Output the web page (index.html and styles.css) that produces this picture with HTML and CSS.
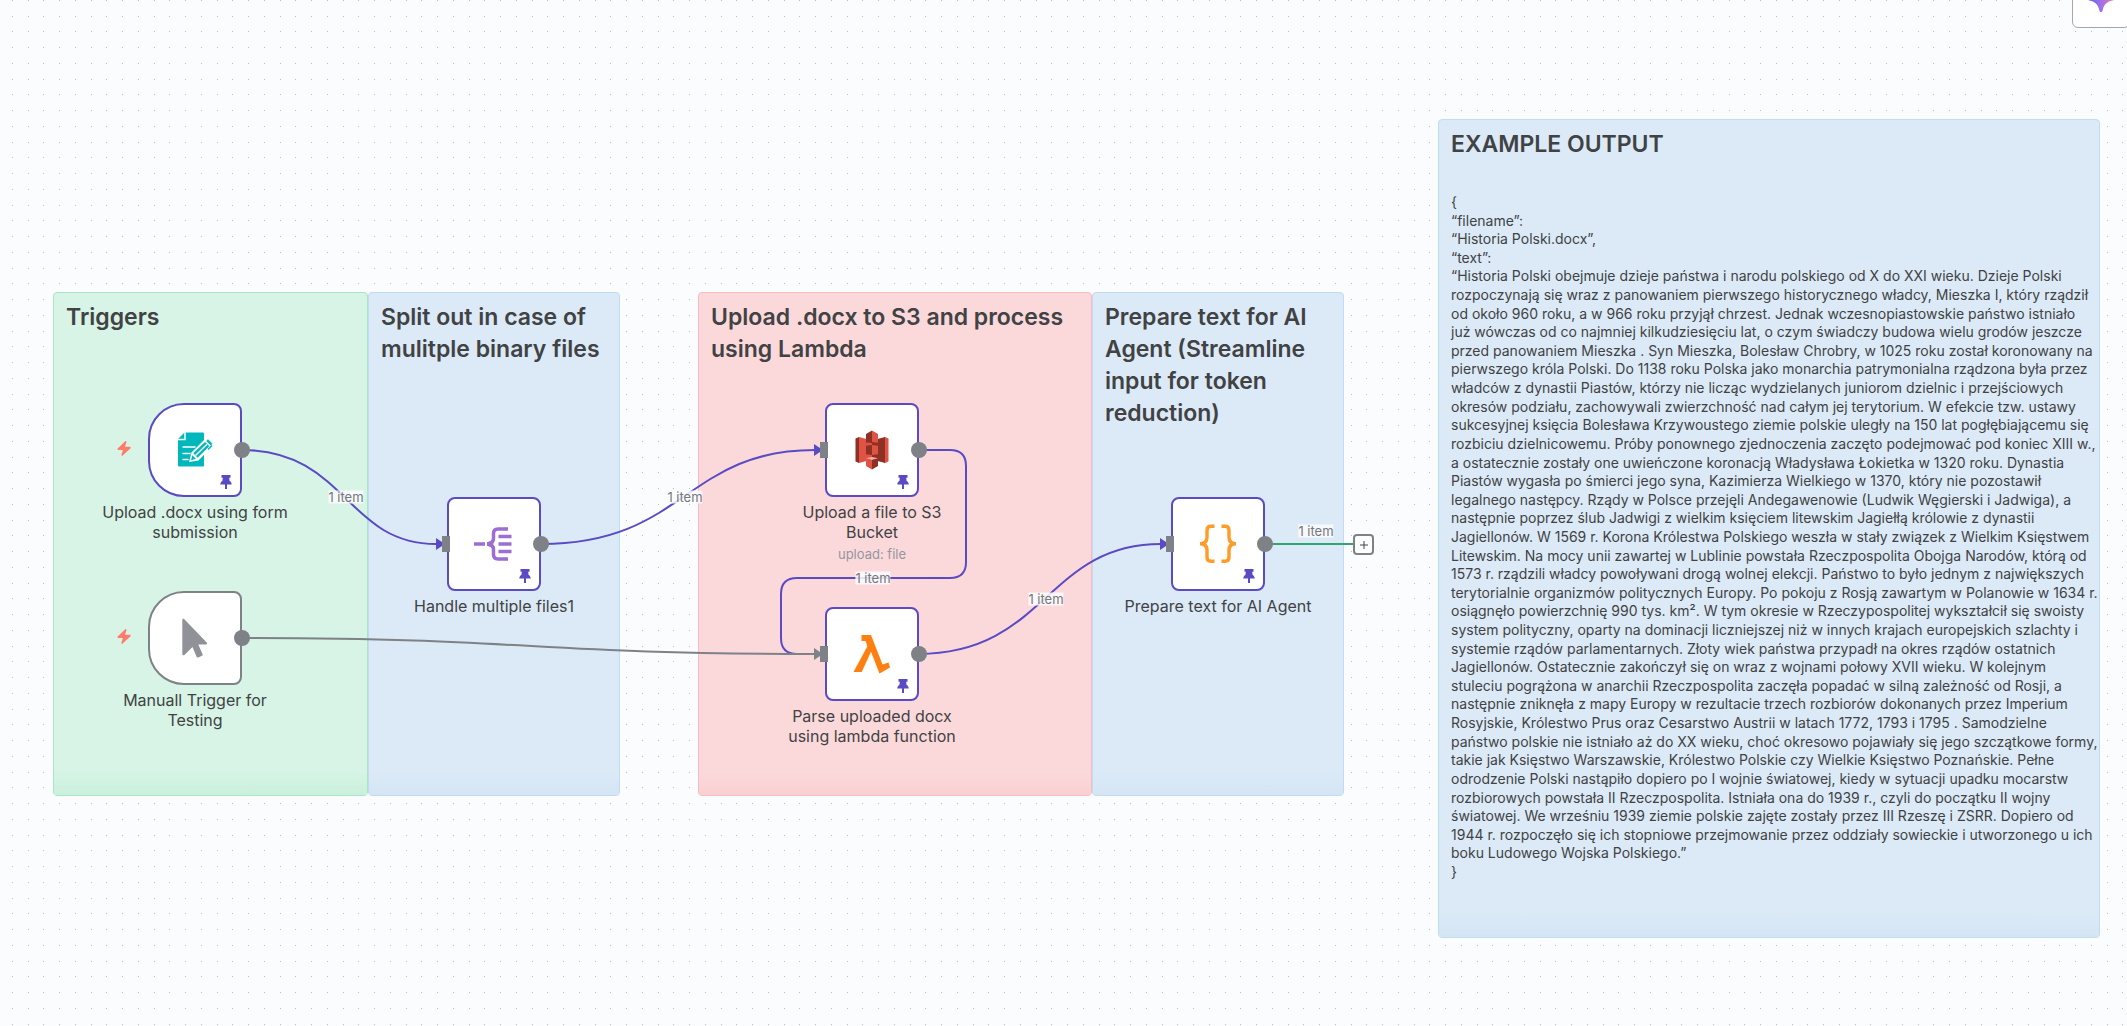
FILE: index.html
```html
<!DOCTYPE html>
<html lang="en">
<head>
<meta charset="utf-8">
<meta name="viewport" content="width=device-width, initial-scale=1">
<title>Workflow canvas</title>
<link rel="stylesheet" href="styles.css">
</head>
<body>
<svg class="symbols" aria-hidden="true">
  <symbol id="pin" viewBox="0 0 12 14"><path d="M1.500 0h9v2.800H9.200L9.600 6c1.400.7 2.100 1.900 2.100 3.500H7V14H5V9.500H.3C.3 7.900 1 6.700 2.400 6l.4-3.200H1.500z"/></symbol>
  <symbol id="bolt" viewBox="0 0 14 15"><path d="M8.200.3a.8.800 0 0 1 1.300.8L8 5.800h4.700c.9 0 1.300 1 .6 1.600l-7.600 7.200a.8.800 0 0 1-1.300-.8L5.900 9H1.300C.4 9 0 8 .7 7.400z"/></symbol>
</svg>
<main class="canvas">
  <svg class="dots" aria-hidden="true">
    <defs>
      <pattern id="grid" x="12" width="63" height="63" patternUnits="userSpaceOnUse">
        <path d="M0 0h1v1H0zM16 0h1v1h-1zM31 0h1v1h-1zM47 0h1v1h-1zM0 16h1v1H0zM16 16h1v1h-1zM31 16h1v1h-1zM47 16h1v1h-1zM0 31h1v1H0zM16 31h1v1h-1zM31 31h1v1h-1zM47 31h1v1h-1zM0 47h1v1H0zM16 47h1v1h-1zM31 47h1v1h-1zM47 47h1v1h-1z"/>
      </pattern>
    </defs>
    <rect width="100%" height="100%" fill="url(#grid)"/>
  </svg>

  <section class="sticky sticky-green sticky-triggers"><h2>Triggers</h2></section>
  <section class="sticky sticky-blue sticky-split"><h2>Split out in case of mulitple binary files</h2></section>
  <section class="sticky sticky-red sticky-upload"><h2>Upload .docx to S3 and process using Lambda</h2></section>
  <section class="sticky sticky-blue sticky-prepare"><h2>Prepare text for AI Agent (Streamline input for token reduction)</h2></section>
  <section class="sticky sticky-blue sticky-output">
    <h2>EXAMPLE OUTPUT</h2>
    <p>{<br>
“filename”:<br>
“Historia Polski.docx”,<br>
“text”:<br>
“Historia Polski obejmuje dzieje państwa i narodu polskiego od X do XXI wieku. Dzieje Polski<br>
rozpoczynają się wraz z panowaniem pierwszego historycznego władcy, Mieszka I, który rządził<br>
od około 960 roku, a w 966 roku przyjął chrzest. Jednak wczesnopiastowskie państwo istniało<br>
już wówczas od co najmniej kilkudziesięciu lat, o czym świadczy budowa wielu grodów jeszcze<br>
przed panowaniem Mieszka . Syn Mieszka, Bolesław Chrobry, w 1025 roku został koronowany na<br>
pierwszego króla Polski. Do 1138 roku Polska jako monarchia patrymonialna rządzona była przez<br>
władców z dynastii Piastów, którzy nie licząc wydzielanych juniorom dzielnic i przejściowych<br>
okresów podziału, zachowywali zwierzchność nad całym jej terytorium. W efekcie tzw. ustawy<br>
sukcesyjnej księcia Bolesława Krzywoustego ziemie polskie uległy na 150 lat pogłębiającemu się<br>
rozbiciu dzielnicowemu. Próby ponownego zjednoczenia zaczęto podejmować pod koniec XIII w.,<br>
a ostatecznie zostały one uwieńczone koronacją Władysława Łokietka w 1320 roku. Dynastia<br>
Piastów wygasła po śmierci jego syna, Kazimierza Wielkiego w 1370, który nie pozostawił<br>
legalnego następcy. Rządy w Polsce przejęli Andegawenowie (Ludwik Węgierski i Jadwiga), a<br>
następnie poprzez ślub Jadwigi z wielkim księciem litewskim Jagiełłą królowie z dynastii<br>
Jagiellonów. W 1569 r. Korona Królestwa Polskiego weszła w stały związek z Wielkim Księstwem<br>
Litewskim. Na mocy unii zawartej w Lublinie powstała Rzeczpospolita Obojga Narodów, którą od<br>
1573 r. rządzili władcy powoływani drogą wolnej elekcji. Państwo to było jednym z największych<br>
terytorialnie organizmów politycznych Europy. Po pokoju z Rosją zawartym w Polanowie w 1634 r.<br>
osiągnęło powierzchnię 990 tys. km². W tym okresie w Rzeczypospolitej wykształcił się swoisty<br>
system polityczny, oparty na dominacji liczniejszej niż w innych krajach europejskich szlachty i<br>
systemie rządów parlamentarnych. Złoty wiek państwa przypadł na okres rządów ostatnich<br>
Jagiellonów. Ostatecznie zakończył się on wraz z wojnami połowy XVII wieku. W kolejnym<br>
stuleciu pogrążona w anarchii Rzeczpospolita zaczęła popadać w silną zależność od Rosji, a<br>
następnie zniknęła z mapy Europy w rezultacie trzech rozbiorów dokonanych przez Imperium<br>
Rosyjskie, Królestwo Prus oraz Cesarstwo Austrii w latach 1772, 1793 i 1795 . Samodzielne<br>
państwo polskie nie istniało aż do XX wieku, choć okresowo pojawiały się jego szczątkowe formy,<br>
takie jak Księstwo Warszawskie, Królestwo Polskie czy Wielkie Księstwo Poznańskie. Pełne<br>
odrodzenie Polski nastąpiło dopiero po I wojnie światowej, kiedy w sytuacji upadku mocarstw<br>
rozbiorowych powstała II Rzeczpospolita. Istniała ona do 1939 r., czyli do początku II wojny<br>
światowej. We wrześniu 1939 ziemie polskie zajęte zostały przez III Rzeszę i ZSRR. Dopiero od<br>
1944 r. rozpoczęło się ich stopniowe przejmowanie przez oddziały sowieckie i utworzonego u ich<br>
boku Ludowego Wojska Polskiego.”<br>
}</p>
  </section>

  <svg class="edges" aria-hidden="true">
    <path class="edge" d="M242 450C346 450 346 544 436 544"/>
    <path class="edge" d="M541 544C685 544 685 450 815 450"/>
    <path class="edge" d="M918 450H950Q966 450 966 466V562Q966 578 950 578H797Q781 578 781 594V638Q781 654 797 654H815"/>
    <path class="edge" d="M918 654C1046 654 1046 544 1161 544"/>
    <path class="edge edge-gray" d="M242 638C531 638 531 654 815 654"/>
    <path class="edge edge-green" d="M1265 544H1353"/>
    <path class="arrow" d="M436 538v12l9-6zM814 444v12l9-6zM1160 538v12l9-6z"/>
    <path class="arrow arrow-gray" d="M814 648v12l9-6z"/>
  </svg>
  <span class="edge-label label-form">1 item</span>
  <span class="edge-label label-split">1 item</span>
  <span class="edge-label label-s3">1 item</span>
  <span class="edge-label label-lambda">1 item</span>
  <span class="edge-label label-out">1 item</span>

  <article class="node node-form">
    <svg class="bolt"><use href="#bolt"/></svg>
    <div class="box trigger">
      <svg class="icon" viewBox="0 0 40 40">
        <path fill="#00b7bc" d="M9.500 2.500H28a1 1 0 0 1 1 1v32a1 1 0 0 1-1 1H4a1 1 0 0 1-1-1V9z"/>
        <path fill="none" stroke="#fff" stroke-width="1.500" d="M10 2v7.500H2.500"/>
        <path fill="none" stroke="#fff" stroke-width="1.500" d="M8 17h12M8 23.500h7M8 29.500h5" stroke-linecap="round"/>
        <path fill="#fff" d="M14 32l2.500-9.500L31 8l8 6.500-15.500 16z"/>
        <path fill="#00b7bc" d="M18.300 23.300L30 12l4.300 4.300L22.600 27.800zM17.300 25.200l3.600 3.600-4.900 1.400zM31.200 11l1.800-1.700 4.500 4.400-1.800 1.700z"/>
        <path stroke="#fff" stroke-width="1.300" d="M20.500 25.500L32 14.200"/>
        <path fill="none" stroke="#00b7bc" stroke-width="1.600" d="M33 19.500l4-4"/>
      </svg>
      <svg class="pin"><use href="#pin"/></svg>
    </div>
    <i class="out"></i>
    <div class="caption">Upload .docx using form submission</div>
  </article>

  <article class="node node-manual">
    <svg class="bolt"><use href="#bolt"/></svg>
    <div class="box trigger idle">
      <svg class="icon" viewBox="0 0 40 40"><path fill="#909298" d="M7.300 1.800c0-1.100 1.100-1.500 1.800-.7L31.700 24.600c.8.900.4 1.900-.8 1.900h-7.600l4.300 9.700c.3.800.1 1.300-.6 1.600l-3.800 1.600c-.8.300-1.300.1-1.600-.7l-4.100-9.800-7.800 7.900c-.9.900-2.400.6-2.400-.7z"/></svg>
    </div>
    <i class="out"></i>
    <div class="caption">Manuall Trigger for Testing</div>
  </article>

  <article class="node node-split">
    <div class="box">
      <svg class="icon" viewBox="0 0 40 40" fill="none" stroke="#9b6dd5" stroke-width="3.500"><path d="M0 20H11M34 5H24q-4.500 0-4.500 4.500V14q0 6-6 6 6 0 6 6v4.500q0 4.500 4.500 4.500h10M24.500 12.500H37.500M24.500 20H37.500M24.500 27.500H37.500"/><path fill="#9b6dd5" stroke="none" d="M13 18.300l6-2.300v8l-6-2.300z"/></svg>
      <svg class="pin"><use href="#pin"/></svg>
    </div>
    <i class="in"></i><i class="out"></i>
    <div class="caption">Handle multiple files1</div>
  </article>

  <article class="node node-s3">
    <div class="box">
      <svg class="icon" viewBox="0 0 40 40">
        <path fill="#8c3123" d="M3.500 8.500L7 7v26l-3.500-1.500zM20 10.500L33 7v26l-13-3.500z"/>
        <path fill="#e05243" d="M7 7l13 3.500v19L7 33zM33 7l3.500 1.500v23L33 33z"/>
        <path fill="#8c3123" d="M14 4l6-3.500V12l-6 .800zM14 15.700l6-.7v10l-6-.8zM14 11.700l6-1.200 6 1.200-6 1.500z"/>
        <path fill="#e05243" d="M20 .5L26 4v8.800l-6-.8zM20 15l6 .7v8.500l-6 .8zM14 28.300l6 1.500v9.700L14 36z"/>
        <path fill="#8c3123" d="M26 28.300l-6 1.500v9.700l6-3.500z"/>
        <path fill="#f2b0a9" d="M14 28.300l6-1.300 6 1.300-6 1.500z"/>
      </svg>
      <svg class="pin"><use href="#pin"/></svg>
    </div>
    <i class="in"></i><i class="out"></i>
    <div class="caption">Upload a file to S3 Bucket<small>upload: file</small></div>
  </article>

  <article class="node node-lambda">
    <div class="box">
      <svg class="icon" viewBox="0 0 40 40"><path fill="#ff7f11" d="M9.500 1H19l11.500 29.500 6-2 1.500 5L27.500 39.500 19 17.800 9.700 38H1.500L15.300 12.500 13.700 7H9.500z"/></svg>
      <svg class="pin"><use href="#pin"/></svg>
    </div>
    <i class="in"></i><i class="out"></i>
    <div class="caption">Parse uploaded docx using lambda function</div>
  </article>

  <article class="node node-prepare">
    <div class="box">
      <svg class="icon" viewBox="0 0 40 40" fill="none" stroke="#ff9b26" stroke-width="3.400"><path d="M16.500 2.200H13q-4 0-4 4v7q0 6.500-7 6.500 7 0 7 6.500v7q0 4 4 4h3.500M23.500 2.200H27q4 0 4 4v7q0 6.500 7 6.500-7 0-7 6.500v7q0 4-4 4h-3.500"/></svg>
      <svg class="pin"><use href="#pin"/></svg>
    </div>
    <i class="in"></i><i class="out"></i>
    <div class="caption">Prepare text for AI Agent</div>
  </article>

  <button class="add" type="button" aria-label="Add node"><svg viewBox="0 0 10 10"><path d="M5 1v8M1 5h8"/></svg></button>
  <button class="assistant" type="button" aria-label="Assistant">
    <svg viewBox="0 0 26 26">
      <defs><linearGradient id="spark" x1="0" x2="1"><stop offset="0" stop-color="#5b60f0"/><stop offset=".5" stop-color="#a070e8"/><stop offset="1" stop-color="#e87ab0"/></linearGradient></defs>
      <path fill="url(#spark)" d="M13 0c.8 0 1.300.5 1.600 1.500C16 7.500 18.500 10 24.500 11.400c2 .5 2 2.700 0 3.200-6 1.400-8.500 3.900-9.900 9.900-.5 2-2.700 2-3.200 0C10 18.500 7.500 16 1.500 14.600c-2-.5-2-2.700 0-3.200C7.500 10 10 7.500 11.400 1.500 11.700.5 12.200 0 13 0z"/>
    </svg>
  </button>
</main>
</body>
</html>
```
FILE: styles.css
```css
* { box-sizing: border-box; }

body {
  margin: 0;
  font-family: Inter, "Liberation Sans", sans-serif;
  color: #414244;
}

.symbols { position: absolute; width: 0; height: 0; }

.canvas {
  position: relative;
  width: 100%;
  height: 100vh;
  overflow: hidden;
  background: #fbfcfe;
}

.dots, .edges {
  position: absolute;
  inset: 0;
  width: 100%;
  height: 100%;
}
.dots { fill: #bcbec3; }

/* Sticky notes */
.sticky {
  position: absolute;
  padding: 8px 12px;
  border: 1px solid;
  border-radius: 4px;
}
.sticky::after {
  content: "";
  position: absolute;
  inset: auto 0 0;
  height: 24px;
  background: linear-gradient(transparent, var(--fade));
}
.sticky h2 {
  margin: 0;
  font-size: 23px;
  font-weight: 600;
  line-height: 32px;
}
.sticky p {
  margin: 33px 0 0;
  font-size: 14px;
  line-height: 1.33;
  white-space: nowrap;
}
.sticky-green { background: #d7f4e6; border-color: #a8e6c8; --fade: #caf0dc; }
.sticky-blue { background: #dceaf7; border-color: #c0dbf4; --fade: #d4e5f4; }
.sticky-red { background: #fbd9db; border-color: #f8bcc1; --fade: #f9d0d2; }

.sticky-triggers { left: 53px; top: 292px; width: 315px; height: 504px; }
.sticky-split { left: 368px; top: 292px; width: 252px; height: 504px; }
.sticky-upload { left: 698px; top: 292px; width: 394px; height: 504px; }
.sticky-prepare { left: 1092px; top: 292px; width: 252px; height: 504px; }
.sticky-output { left: 1438px; top: 119px; width: 662px; height: 819px; }

/* Connections */
.edge { fill: none; stroke: #5a4bc4; stroke-width: 2; }
.edge-gray { stroke: #7e8186; }
.edge-green { stroke: #2fa56f; }
.arrow { fill: #5a4bc4; }
.arrow-gray { fill: #7e8186; }

.edge-label {
  position: absolute;
  transform: translate(-50%, -50%);
  background: rgba(251, 252, 254, .85);
  color: #75777d;
  font-size: 13px;
  line-height: 13px;
  white-space: nowrap;
}
.label-form { left: 346px; top: 497px; }
.label-split { left: 685px; top: 497px; }
.label-s3 { left: 873px; top: 578px; }
.label-lambda { left: 1046px; top: 599px; }
.label-out { left: 1316px; top: 531px; }

/* Nodes */
.node {
  position: absolute;
  display: flex;
  flex-direction: column;
  align-items: center;
  gap: 5px;
  width: 94px;
}
.node-form { left: 148px; top: 403px; }
.node-manual { left: 148px; top: 591px; }
.node-split { left: 447px; top: 497px; }
.node-s3 { left: 825px; top: 403px; }
.node-lambda { left: 825px; top: 607px; }
.node-prepare { left: 1171px; top: 497px; }

.box {
  display: grid;
  place-items: center;
  flex: none;
  width: 94px;
  height: 94px;
  background: #fff;
  border: 2px solid #5a4bc4;
  border-radius: 8px;
}
.trigger { border-radius: 36px 8px 8px 36px; }
.idle { border-color: #7e8186; }
.icon { width: 40px; height: 40px; }

.pin {
  position: absolute;
  left: 72px;
  top: 72px;
  width: 12px;
  height: 14px;
  fill: #5a4bc4;
}
.bolt {
  position: absolute;
  left: -31px;
  top: 38px;
  width: 14px;
  height: 15px;
  fill: #ff7c6b;
}
.in, .out { position: absolute; background: #7e8186; }
.in { left: -5px; top: 39px; width: 8px; height: 16px; }
.out { left: 86px; top: 39px; width: 16px; height: 16px; border-radius: 50%; }

.caption {
  flex: none;
  width: 190px;
  font-size: 16px;
  font-weight: 400;
  line-height: 20px;
  text-align: center;
}
.caption small {
  display: block;
  margin-top: 2px;
  color: #9496a0;
  font-size: 13px;
}

.add {
  position: absolute;
  left: 1353px;
  top: 534px;
  display: grid;
  place-items: center;
  width: 21px;
  height: 21px;
  padding: 0;
  background: #fff;
  border: 2px solid #7e8186;
  border-radius: 4px;
}
.add svg { width: 10px; height: 10px; stroke: #414244; }

.assistant {
  position: absolute;
  right: -3px;
  top: -30px;
  display: grid;
  place-items: center;
  width: 58px;
  height: 58px;
  padding: 0;
  background: #fff;
  border: 1px solid #a5a6b2;
  border-radius: 6px;
}
.assistant svg { width: 26px; height: 26px; }
```
